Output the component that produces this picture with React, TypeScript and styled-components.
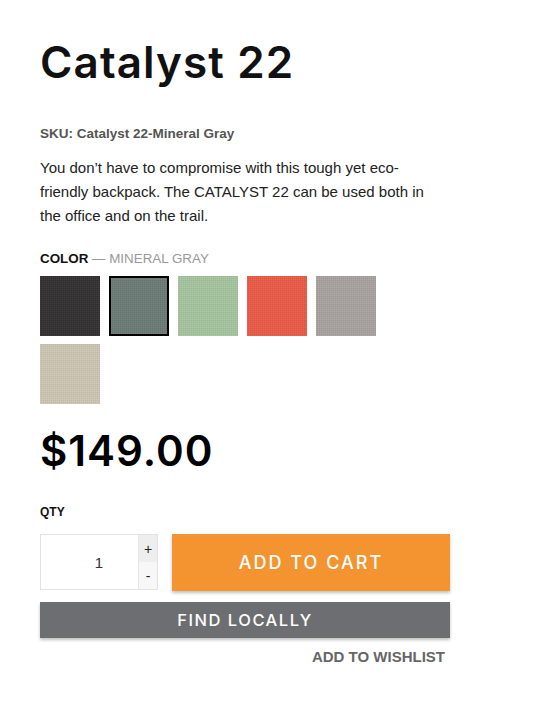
import React, { useState } from "react";
import styled, { createGlobalStyle } from "styled-components";

const Global = createGlobalStyle`
  html, body { margin: 0; padding: 0; background: #fff; }
  body { font-family: "Liberation Sans", Arial, sans-serif; }
`;

const Page = styled.div`
  padding: 36px 40px 40px 40px;
  width: 410px;
`;

const Title = styled.h1`
  margin: 0;
  font-family: Inter, "Open Sans", sans-serif;
  font-weight: 560;
  font-size: 44px;
  line-height: 52px;
  color: #111;
  letter-spacing: 1.1px;
`;

const Sku = styled.div`
  margin-top: 38px;
  font-size: 13.5px;
  font-weight: bold;
  color: #555;
  line-height: 16px;
`;

const Description = styled.p`
  margin: 14px 0 0 0;
  font-size: 15px;
  line-height: 24px;
  color: #222;
  width: 400px;
`;

const ColorLabel = styled.div`
  margin-top: 23px;
  font-size: 13.4px;
  line-height: 16px;
  color: #111;
  font-weight: bold;
  text-transform: uppercase;
`;

const ColorValue = styled.span`
  font-weight: normal;
  color: #999;
`;

const Swatches = styled.div`
  display: flex;
  flex-wrap: wrap;
  gap: 8px 9px;
  margin-top: 9px;
  width: 350px;
`;

const Swatch = styled.button<{ $color: string; $selected: boolean }>`
  width: 60px;
  height: 60px;
  padding: 0;
  border: ${(p) => (p.$selected ? "2px solid #000" : "none")};
  background: ${(p) => p.$color};
  background-image: repeating-linear-gradient(
      0deg,
      rgba(255, 255, 255, 0.03) 0 1px,
      rgba(0, 0, 0, 0.03) 1px 2px
    ),
    repeating-linear-gradient(
      90deg,
      rgba(255, 255, 255, 0.03) 0 1px,
      rgba(0, 0, 0, 0.03) 1px 2px
    );
  cursor: pointer;
`;

const Price = styled.div`
  margin-top: 22px;
  font-family: Inter, "Open Sans", sans-serif;
  font-weight: 600;
  font-size: 42px;
  line-height: 50px;
  color: #000;
  letter-spacing: 1px;
`;

const QtyLabel = styled.div`
  margin-top: 28px;
  font-size: 12px;
  font-weight: bold;
  color: #111;
  line-height: 16px;
`;

const BuyRow = styled.div`
  display: flex;
  gap: 14px;
  margin-top: 14px;
`;

const QtyBox = styled.div`
  position: relative;
  width: 118px;
  height: 56px;
  border: 1px solid #e2e2e2;
  box-sizing: border-box;
`;

const QtyInput = styled.div`
  height: 100%;
  display: flex;
  align-items: center;
  justify-content: center;
  font-size: 15px;
  color: #333;
`;

const Steppers = styled.div`
  position: absolute;
  top: 0;
  right: 0;
  bottom: 0;
  width: 18px;
  display: flex;
  flex-direction: column;
  border-left: 1px solid #e6e6e6;
`;

const Step = styled.button<{ $shade: string }>`
  flex: 1;
  border: none;
  padding: 0;
  background: ${(p) => p.$shade};
  font-family: "Liberation Sans", Arial, sans-serif;
  font-size: 14px;
  color: #222;
  cursor: pointer;
`;

const CartButton = styled.button`
  flex: 1;
  height: 57px;
  border: none;
  background: #f49431;
  color: #fff;
  font-family: Inter, "Open Sans", sans-serif;
  font-weight: 500;
  font-size: 18px;
  letter-spacing: 2px;
  box-shadow: 0 2px 3px rgba(0, 0, 0, 0.25);
  cursor: pointer;
`;

const LocalButton = styled.button`
  display: block;
  width: 100%;
  margin-top: 11px;
  height: 36px;
  border: none;
  background: #6d6e71;
  color: #fff;
  font-family: Inter, "Open Sans", sans-serif;
  font-weight: 500;
  font-size: 16.5px;
  letter-spacing: 1.5px;
  box-shadow: 0 2px 3px rgba(0, 0, 0, 0.25);
  cursor: pointer;
`;

const WishRow = styled.div`
  display: flex;
  justify-content: flex-end;
  margin-top: 10px;
  padding-right: 5px;
`;

const Wish = styled.a`
  font-size: 15px;
  font-weight: bold;
  color: #666;
  text-transform: uppercase;
  cursor: pointer;
`;

const colors = [
  { name: "Black", c: "#322f30" },
  { name: "Mineral Gray", c: "#6b7b76" },
  { name: "Sage", c: "#a5c59f" },
  { name: "Coral", c: "#ec5a46" },
  { name: "Stone", c: "#a8a2a0" },
  { name: "Sand", c: "#cdc6b4" },
];

export default function App() {
  const [sel, setSel] = useState(1);
  const [qty, setQty] = useState(1);
  return (
    <Page>
      <Global />
      <Title>Catalyst 22</Title>
      <Sku>SKU: Catalyst 22-Mineral Gray</Sku>
      <Description>
        You don’t have to compromise with this tough yet eco-friendly backpack. The CATALYST 22
        can be used both in the office and on the trail.
      </Description>
      <ColorLabel>
        Color <ColorValue>— {colors[sel].name}</ColorValue>
      </ColorLabel>
      <Swatches>
        {colors.map((c, i) => (
          <Swatch key={c.name} $color={c.c} $selected={i === sel} onClick={() => setSel(i)} aria-label={c.name} />
        ))}
      </Swatches>
      <Price>$149.00</Price>
      <QtyLabel>QTY</QtyLabel>
      <BuyRow>
        <QtyBox>
          <QtyInput>{qty}</QtyInput>
          <Steppers>
            <Step $shade="#eeeeee" onClick={() => setQty(qty + 1)}>+</Step>
            <Step $shade="#f7f7f7" onClick={() => setQty(Math.max(1, qty - 1))}>-</Step>
          </Steppers>
        </QtyBox>
        <CartButton>ADD TO CART</CartButton>
      </BuyRow>
      <LocalButton>FIND LOCALLY</LocalButton>
      <WishRow>
        <Wish>Add to Wishlist</Wish>
      </WishRow>
    </Page>
  );
}
